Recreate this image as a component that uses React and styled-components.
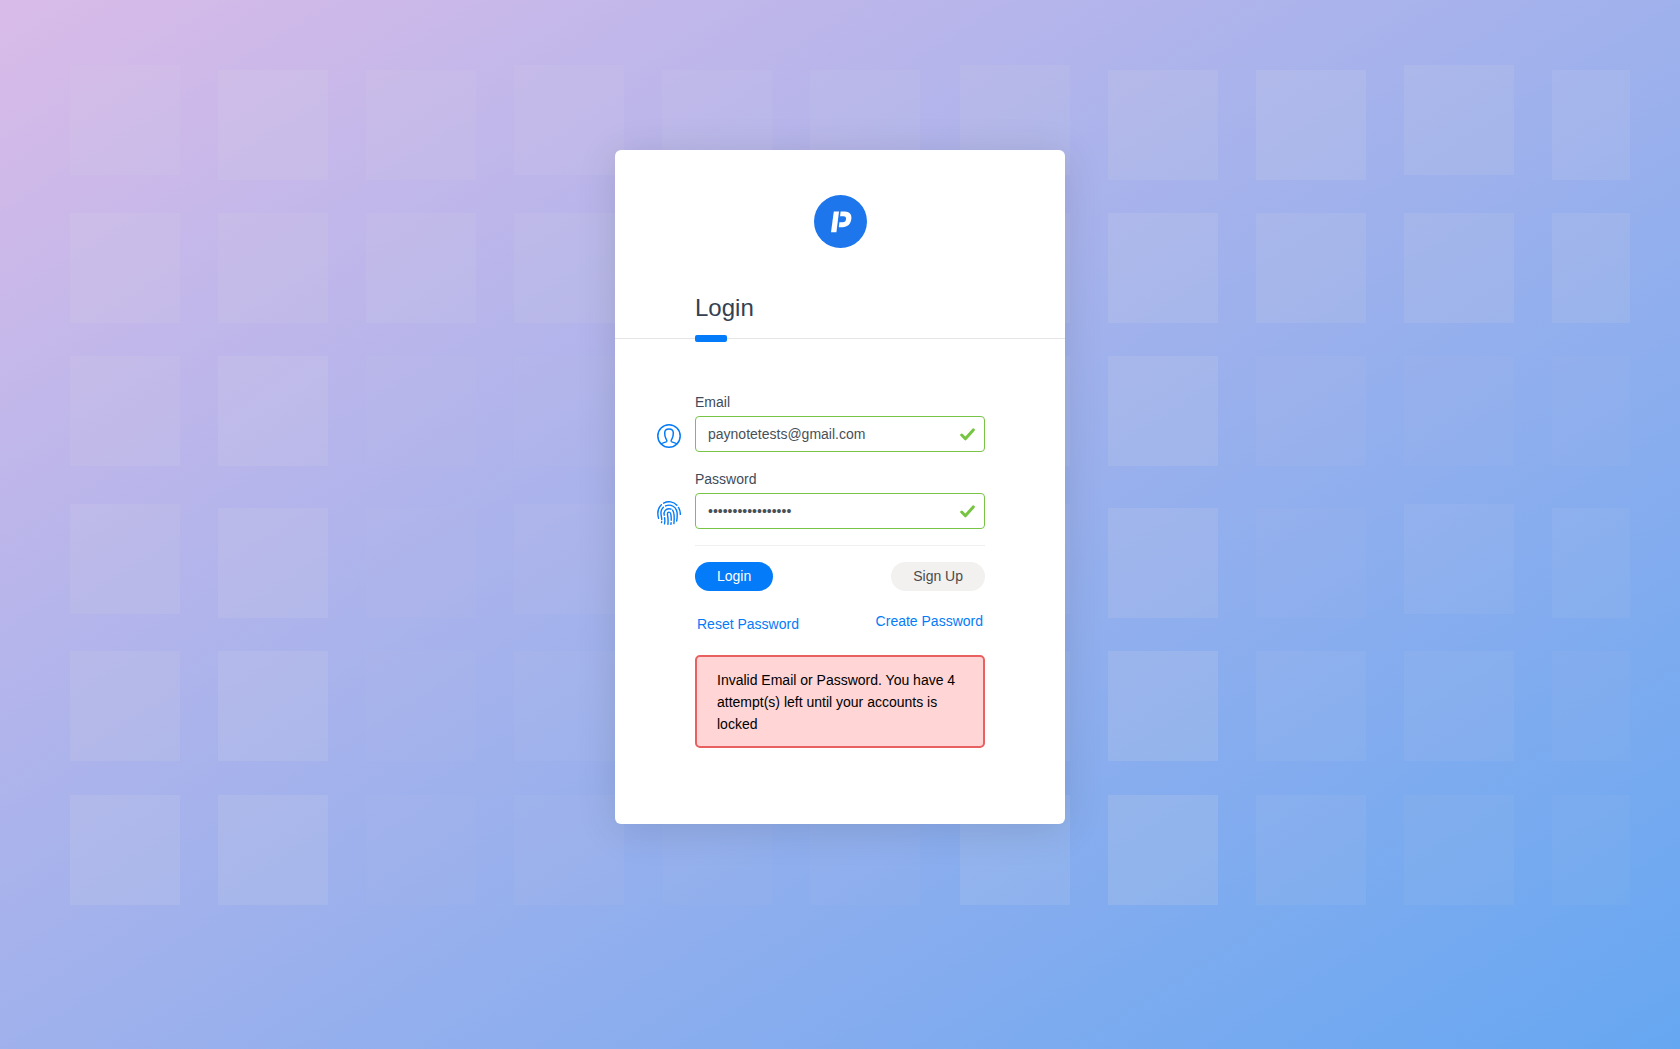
import React from "react";
import styled, { createGlobalStyle } from "styled-components";

const GlobalStyle = createGlobalStyle`
  *, *::before, *::after { box-sizing: border-box; }
  body {
    margin: 0;
    font-family: "Liberation Sans", Arial, sans-serif;
    font-size: 14px;
    line-height: 21px;
    color: #3e4b5b;
  }
`;

const Page = styled.main`
  position: relative;
  min-height: 100vh;
  padding: 150px 20px;
  background: linear-gradient(to bottom right, #d9bbe8, #66a7f1);
`;

const Backdrop = styled.svg`
  position: absolute;
  inset: 0;
  width: 100%;
  height: 100%;
`;

const Card = styled.section`
  position: relative;
  max-width: 450px;
  margin: 0 auto;
  padding-bottom: 76px;
  background: #fff;
  border-radius: 6px;
  box-shadow: 0 5px 40px rgba(0, 0, 0, 0.12);
`;

const CardHeader = styled.header`
  position: relative;
  display: flex;
  flex-direction: column;
  gap: 44px;
  padding: 45px 80px 14px;
  border-bottom: 1px solid #e5e5e5;

  &::after {
    content: "";
    position: absolute;
    left: 80px;
    bottom: -4px;
    width: 32px;
    height: 7px;
    border-radius: 2px;
    background: #047bf8;
  }
`;

const Logo = styled.svg`
  width: 53px;
  height: 53px;
  align-self: center;
`;

const Title = styled.h1`
  margin: 0;
  font-size: 24px;
  line-height: 32px;
  font-weight: 400;
  color: #334152;
`;

const Form = styled.form`
  display: flex;
  flex-direction: column;
  padding: 53px 80px 0 42px;
`;

const Fields = styled.div`
  display: flex;
  flex-direction: column;
  gap: 17px;
`;

const FieldRow = styled.div`
  display: grid;
  grid-template-columns: 24px 1fr;
  column-gap: 14px;
  align-items: end;
`;

const FieldIcon = styled.svg`
  width: 24px;
  height: 24px;
  margin-bottom: 4px;
  fill: none;
  stroke: #047bf8;
  stroke-linecap: round;
  stroke-linejoin: round;
`;

const FieldBody = styled.div`
  display: flex;
  flex-direction: column;
  gap: 3px;
`;

const Label = styled.label`
  color: #3e4b5b;
`;

const InputWrap = styled.div`
  display: flex;
  align-items: center;
  height: 36px;
  padding: 0 9px 0 12px;
  border: 1px solid #79c447;
  border-radius: 4px;
  background: #fff;
`;

const Input = styled.input`
  flex: 1;
  min-width: 0;
  padding: 0;
  border: 0;
  outline: 0;
  background: transparent;
  font: inherit;
  color: #495057;
`;

const CheckMark = styled.svg`
  width: 15px;
  height: 13px;
  fill: none;
  stroke: #76c442;
  stroke-width: 3;
  stroke-linecap: round;
  stroke-linejoin: round;
`;

const Actions = styled.div`
  display: flex;
  flex-direction: column;
  margin: 16px 0 0 38px;
`;

const ButtonRow = styled.div`
  display: flex;
  justify-content: space-between;
  padding-top: 16px;
  border-top: 1px solid #efefef;
`;

const Button = styled.button`
  height: 29px;
  padding: 0 22px;
  border: 0;
  border-radius: 15px;
  font: inherit;
  cursor: pointer;
  color: ${(p) => (p.$primary ? "#fff" : "#4b4b4b")};
  background: ${(p) => (p.$primary ? "#047bf8" : "#f2f1ef")};
`;

const LinkRow = styled.nav`
  display: flex;
  justify-content: space-between;
  align-items: flex-start;
  padding: 20px 2px;
`;

const TextLink = styled.a`
  color: #047bf8;
  text-decoration: none;
  padding-top: ${(p) => (p.$lowered ? "3px" : "0")};
`;

const Alert = styled.p`
  margin: 0;
  padding: 12px 20px 11px;
  border: 2px solid #e96060;
  border-radius: 5px;
  background: #ffd5d5;
  line-height: 22px;
  color: #000;
`;

const tileRows = [
  { y: 70, lift: 5, alpha: [9, 10, 8, 8, 7, 7, 8, 11, 12, 11, 10] },
  { y: 213, lift: 0, alpha: [10, 11, 9, 8, 8, 8, 8, 12, 11, 11, 11] },
  { y: 356, lift: 0, alpha: [10, 12, 4, 4, 4, 4, 8, 12, 5, 4, 4] },
  { y: 508, lift: 4, alpha: [11, 12, 4, 5, 4, 4, 7, 12, 4, 6, 6] },
  { y: 651, lift: 0, alpha: [11, 12, 4, 5, 4, 4, 7, 13, 6, 6, 4] },
  { y: 795, lift: 0, alpha: [12, 12, 4, 5, 3, 3, 10, 14, 7, 5, 4] },
];

const tileColumns = [70, 218, 366, 514, 662, 810, 960, 1108, 1256, 1404, 1552];

function TileBackdrop() {
  return (
    <Backdrop viewBox="0 0 1680 1049" preserveAspectRatio="xMidYMid slice" aria-hidden="true">
      {tileRows.map((row) =>
        tileColumns.map((x, i) => (
          <rect
            key={`${row.y}-${x}`}
            x={x}
            y={i % 3 === 0 ? row.y - row.lift : row.y}
            width={i === 10 ? 78 : 110}
            height={110}
            fill="#dcdce4"
            fillOpacity={(row.alpha[i] * 1.2) / 100}
          />
        ))
      )}
    </Backdrop>
  );
}

function UserIcon() {
  return (
    <FieldIcon viewBox="0 0 24 24" strokeWidth="1.5" aria-hidden="true">
      <circle cx="12" cy="12" r="11.2" />
      <path d="M4.3 19.8C5.4 18.7 9.4 18.4 9.8 17.2C10.1 16.2 9.5 15.6 8.9 14.6C7.8 12.8 7.7 10.6 7.7 9C7.7 6.6 9.3 5 12 5C14.7 5 16.3 6.6 16.3 9C16.3 10.6 16.2 12.8 15.1 14.6C14.5 15.6 13.9 16.2 14.2 17.2C14.6 18.4 18.6 18.7 19.7 19.8" />
    </FieldIcon>
  );
}

function FingerprintIcon() {
  return (
    <FieldIcon viewBox="0 0 24 24" strokeWidth="1.4" aria-hidden="true">
      <path d="M1.6 17.4C0.2 12.4 0.6 7.4 4.4 3.8" />
      <path d="M6.6 2.2C11 -0.2 16.5 0.5 19.9 4.2" />
      <path d="M21.4 6.4C22.8 8.4 23.4 10.8 23.3 13.4" />
      <path d="M4.7 18.6C5 16.4 3.4 13.7 4.1 10.4C4.5 8.6 5.2 7.3 6.4 6.2" />
      <path d="M8.6 4.9C13.8 2.7 19.4 5.8 20.1 11.6C20.3 14.4 20.2 17 19.7 20" />
      <path d="M4.5 21.6L4.7 20.8" />
      <path d="M7.5 22.8C8 20.8 8 18.8 7.6 16.6" />
      <path d="M7.2 14.2C6.4 10.6 8.6 7.7 12 7.7C12.8 7.7 13.4 7.9 14 8.2" />
      <path d="M15.6 9.2C17.8 12.4 17.4 17.8 16.9 22.6" />
      <path d="M10.9 23.3C11.3 19.8 11.1 17 10.5 14C9.9 10.6 13.2 10.2 13.8 13.2C14.2 15.2 14.3 17.4 14.2 19.2" />
      <path d="M14.1 21.6L13.9 23.3" />
    </FieldIcon>
  );
}

function ValidMark() {
  return (
    <CheckMark viewBox="0 0 15 13" aria-hidden="true">
      <path d="M1.7 7L5.4 10.8L13.3 1.9" />
    </CheckMark>
  );
}

function Field({ id, label, icon, ...inputProps }) {
  return (
    <FieldRow>
      {icon}
      <FieldBody>
        <Label htmlFor={id}>{label}</Label>
        <InputWrap>
          <Input id={id} {...inputProps} />
          <ValidMark />
        </InputWrap>
      </FieldBody>
    </FieldRow>
  );
}

export default function App() {
  return (
    <>
      <GlobalStyle />
      <Page>
        <TileBackdrop />
        <Card>
          <CardHeader>
            <Logo viewBox="0 0 53 53" role="img" aria-label="Paynote">
              <circle cx="26.5" cy="26.5" r="26.5" fill="#1d76ec" />
              <path d="M19.8 16.5H25L22.4 37.3H17Z" fill="#fff" />
              <path d="M26.6 16.5H30.8C35.4 16.5 37.9 19.4 37.4 23.8C36.8 29 33.6 32.2 28.6 32.2H24.8L25.4 27.3H28.6C30.8 27.3 31.8 25.8 32 24.2C32.2 22.4 31.4 21.3 29.5 21.3H26.1Z" fill="#fff" />
            </Logo>
            <Title>Login</Title>
          </CardHeader>
          <Form onSubmit={(e) => e.preventDefault()}>
            <Fields>
              <Field
                id="email"
                label="Email"
                type="email"
                defaultValue="paynotetests@gmail.com"
                icon={<UserIcon />}
              />
              <Field
                id="password"
                label="Password"
                type="password"
                defaultValue="paynotepassword17"
                icon={<FingerprintIcon />}
              />
            </Fields>
            <Actions>
              <ButtonRow>
                <Button type="submit" $primary>Login</Button>
                <Button type="button">Sign Up</Button>
              </ButtonRow>
              <LinkRow>
                <TextLink href="#reset" $lowered>Reset Password</TextLink>
                <TextLink href="#create">Create Password</TextLink>
              </LinkRow>
              <Alert role="alert">
                Invalid Email or Password. You have 4 attempt(s) left until your accounts is locked
              </Alert>
            </Actions>
          </Form>
        </Card>
      </Page>
    </>
  );
}
